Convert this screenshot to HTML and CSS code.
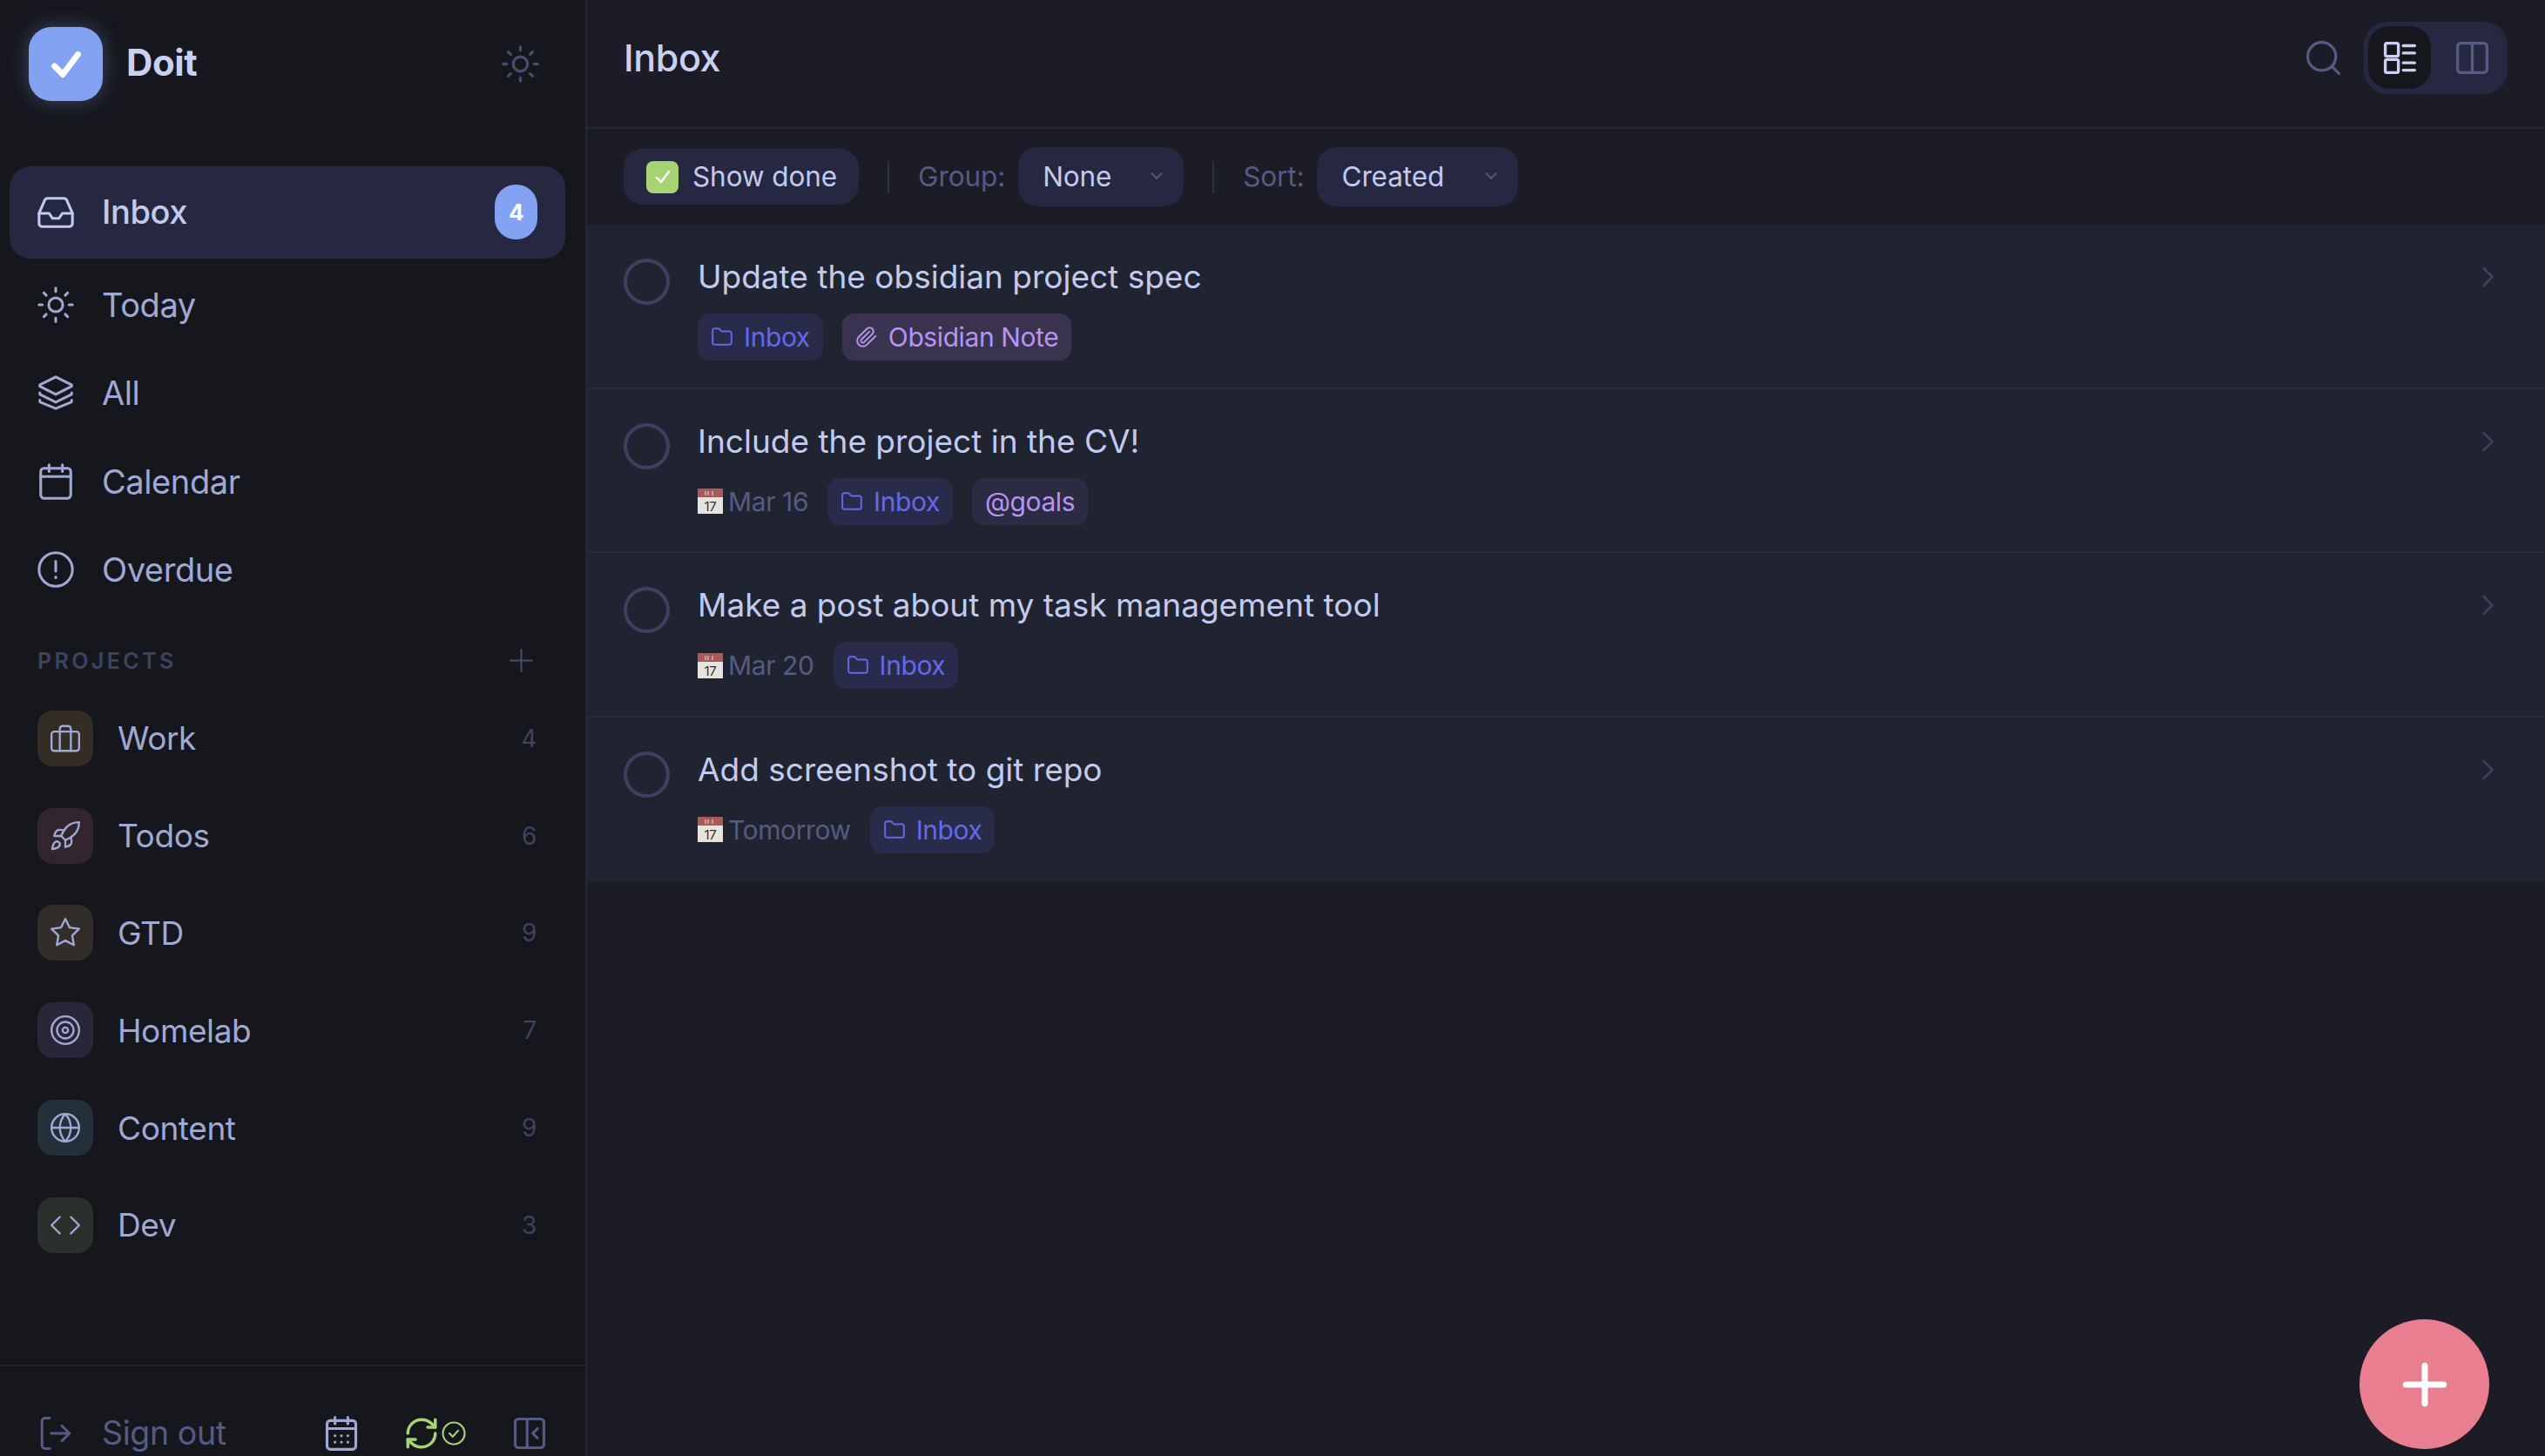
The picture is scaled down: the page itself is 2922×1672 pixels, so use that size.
FILE: index.html
```html
<!DOCTYPE html>
<html lang="en">
<head>
  <meta charset="UTF-8">
  <title>Doit</title>
  <link rel="stylesheet" href="styles.css">
</head>
<body>
  <svg class="sprite" xmlns="http://www.w3.org/2000/svg">
    <symbol id="i-inbox" viewBox="0 0 24 24"><path d="M2 13h6l2 3h4l2-3h6"/><path d="M5.400 5.100 2 13v6a2 2 0 0 0 2 2h16a2 2 0 0 0 2-2v-6l-3.400-7.900A2 2 0 0 0 16.800 4H7.200a2 2 0 0 0-1.800 1.100z"/></symbol>
    <symbol id="i-sun" viewBox="0 0 24 24"><circle cx="12" cy="12" r="4.200"/><path d="M12 2v2M12 20v2M4.900 4.900l1.400 1.400M17.700 17.700l1.400 1.400M2 12h2M20 12h2M6.300 17.700l-1.400 1.400M19.100 4.900l-1.400 1.400"/></symbol>
    <symbol id="i-layers" viewBox="0 0 24 24"><path d="M12 2.500 2.500 7.200v1L12 13l9.500-4.800v-1z"/><path d="M2.500 12v1l9.500 4.700 9.500-4.700v-1"/><path d="M2.500 16.500v1l9.500 4 9.500-4v-1"/></symbol>
    <symbol id="i-calendar" viewBox="0 0 24 24"><rect x="3" y="4" width="18" height="18" rx="2"/><path d="M8 2v4M16 2v4M3 9h18"/></symbol>
    <symbol id="i-alert" viewBox="0 0 24 24"><circle cx="12" cy="12" r="10"/><path d="M12 7v6M12 16.500v.5"/></symbol>
    <symbol id="i-plus" viewBox="0 0 24 24"><path d="M12 3v18M3 12h18"/></symbol>
    <symbol id="i-briefcase" viewBox="0 0 24 24"><rect x="2" y="7" width="20" height="14" rx="2"/><path d="M16 21V5a2 2 0 0 0-2-2h-4a2 2 0 0 0-2 2v16"/></symbol>
    <symbol id="i-rocket" viewBox="0 0 24 24"><path d="M4.500 16.500c-1.500 1.260-2 5-2 5s3.740-.5 5-2c.71-.84.7-2.130-.09-2.910a2.180 2.180 0 0 0-2.910-.09z"/><path d="m12 15-3-3a22 22 0 0 1 2-3.950A12.880 12.880 0 0 1 22 2c0 2.720-.78 7.500-6 11a22.350 22.350 0 0 1-4 2z"/><path d="M9 12H4s.55-3.030 2-4c1.620-1.080 5 0 5 0"/><path d="M12 15v5s3.030-.55 4-2c1.080-1.620 0-5 0-5"/></symbol>
    <symbol id="i-star" viewBox="0 0 24 24"><path d="M12 2l3.090 6.260L22 9.270l-5 4.870 1.180 6.880L12 17.770l-6.180 3.250L7 14.140 2 9.270l6.910-1.010z"/></symbol>
    <symbol id="i-target" viewBox="0 0 24 24"><circle cx="12" cy="12" r="10"/><circle cx="12" cy="12" r="6"/><circle cx="12" cy="12" r="2"/></symbol>
    <symbol id="i-globe" viewBox="0 0 24 24"><circle cx="12" cy="12" r="10"/><path d="M2 12h20"/><path d="M12 2a15.300 15.300 0 0 1 4 10 15.300 15.300 0 0 1-4 10 15.300 15.300 0 0 1-4-10 15.300 15.300 0 0 1 4-10z"/></symbol>
    <symbol id="i-code" viewBox="0 0 24 24"><path d="M16 18l6-6-6-6M8 6l-6 6 6 6"/></symbol>
    <symbol id="i-logout" viewBox="0 0 24 24"><path d="M8 22H5a2 2 0 0 1-2-2V4a2 2 0 0 1 2-2h3"/><path d="M16 17l5-5-5-5M21 12H9"/></symbol>
    <symbol id="i-calendar-days" viewBox="0 0 24 24"><rect x="3" y="4" width="18" height="18" rx="2"/><path d="M8 2v4M16 2v4M3 9h18"/><path d="M8 13.500h.01M12 13.500h.01M16 13.500h.01M8 17.500h.01M12 17.500h.01M16 17.500h.01"/></symbol>
    <symbol id="i-sync" viewBox="0 0 24 24"><path d="M3 12a9 9 0 0 1 9-9 9.750 9.750 0 0 1 6.740 2.740L21 8"/><path d="M21 3v5h-5"/><path d="M21 12a9 9 0 0 1-9 9 9.750 9.750 0 0 1-6.740-2.740L3 16"/><path d="M8 16H3v5"/></symbol>
    <symbol id="i-check-circle" viewBox="0 0 24 24"><circle cx="12" cy="12" r="10"/><path d="M8 12l3 3 5-5.500"/></symbol>
    <symbol id="i-panel" viewBox="0 0 24 24"><rect x="3" y="3" width="18" height="18" rx="2"/><path d="M10.500 3v18M17 9l-3 3 3 3"/></symbol>
    <symbol id="i-search" viewBox="0 0 24 24"><circle cx="11" cy="11" r="9"/><path d="M22 22l-4.500-4.500"/></symbol>
    <symbol id="i-list" viewBox="0 0 24 24"><rect x="3" y="3" width="8" height="8" rx="1"/><rect x="3" y="13" width="8" height="8" rx="1"/><path d="M14 4.500h7M14 9h7M14 15h7M14 19.500h7"/></symbol>
    <symbol id="i-columns" viewBox="0 0 24 24"><rect x="3" y="3" width="18" height="18" rx="2"/><path d="M12 3v18"/></symbol>
    <symbol id="i-chevron-down" viewBox="0 0 24 24"><path d="M6 9l6 6 6-6"/></symbol>
    <symbol id="i-chevron-right" viewBox="0 0 24 24"><path d="M9 3l9 9-9 9"/></symbol>
    <symbol id="i-folder" viewBox="0 0 24 24"><path d="M4 20h16a2 2 0 0 0 2-2V8a2 2 0 0 0-2-2h-7.930a2 2 0 0 1-1.660-.9l-.82-1.200A2 2 0 0 0 7.930 3H4a2 2 0 0 0-2 2v13c0 1.100.9 2 2 2z"/></symbol>
    <symbol id="i-clip" viewBox="0 0 24 24"><path d="m21.440 11.050-9.190 9.190a6 6 0 0 1-8.490-8.490l8.570-8.570A4 4 0 1 1 18 8.840l-8.590 8.570a2 2 0 0 1-2.830-2.830l8.490-8.480"/></symbol>
    <symbol id="i-check" viewBox="0 0 24 24"><path d="M5 13l5 5L19 6"/></symbol>
    <symbol id="i-date" viewBox="0 0 29 29">
      <rect width="29" height="29" fill="#e6e4de"/>
      <rect width="29" height="10" fill="#a75a58"/>
      <path d="M9 3v5M12 3v5M17 3v5" stroke="#e6e4de" stroke-width="1"/>
      <text x="14.500" y="26" text-anchor="middle" class="date-num">17</text>
    </symbol>
  </svg>

  <aside class="sidebar">
    <div class="brand">
      <span class="logo"><svg class="ico"><use href="#i-check"/></svg></span>
      <span class="brand-name">Doit</span>
      <svg class="ico theme-toggle"><use href="#i-sun"/></svg>
    </div>

    <nav class="nav">
      <a class="nav-item active"><svg class="ico"><use href="#i-inbox"/></svg><span>Inbox</span><span class="badge">4</span></a>
      <a class="nav-item"><svg class="ico"><use href="#i-sun"/></svg><span>Today</span></a>
      <a class="nav-item"><svg class="ico"><use href="#i-layers"/></svg><span>All</span></a>
      <a class="nav-item"><svg class="ico"><use href="#i-calendar"/></svg><span>Calendar</span></a>
      <a class="nav-item"><svg class="ico"><use href="#i-alert"/></svg><span>Overdue</span></a>
    </nav>

    <div class="section-head">
      <span>PROJECTS</span>
      <svg class="ico"><use href="#i-plus"/></svg>
    </div>

    <ul class="projects">
      <li class="project"><span class="project-ico work"><svg class="ico"><use href="#i-briefcase"/></svg></span><span class="project-name">Work</span><span class="count">4</span></li>
      <li class="project"><span class="project-ico todos"><svg class="ico"><use href="#i-rocket"/></svg></span><span class="project-name">Todos</span><span class="count">6</span></li>
      <li class="project"><span class="project-ico gtd"><svg class="ico"><use href="#i-star"/></svg></span><span class="project-name">GTD</span><span class="count">9</span></li>
      <li class="project"><span class="project-ico homelab"><svg class="ico"><use href="#i-target"/></svg></span><span class="project-name">Homelab</span><span class="count">7</span></li>
      <li class="project"><span class="project-ico content"><svg class="ico"><use href="#i-globe"/></svg></span><span class="project-name">Content</span><span class="count">9</span></li>
      <li class="project"><span class="project-ico dev"><svg class="ico"><use href="#i-code"/></svg></span><span class="project-name">Dev</span><span class="count">3</span></li>
    </ul>

    <footer class="side-foot">
      <svg class="ico signout-ico"><use href="#i-logout"/></svg>
      <span class="signout">Sign out</span>
      <svg class="ico foot-cal"><use href="#i-calendar-days"/></svg>
      <svg class="ico foot-sync"><use href="#i-sync"/></svg>
      <svg class="ico foot-ok"><use href="#i-check-circle"/></svg>
      <svg class="ico foot-panel"><use href="#i-panel"/></svg>
    </footer>
  </aside>

  <main class="main">
    <header class="topbar">
      <h1>Inbox</h1>
      <svg class="ico search"><use href="#i-search"/></svg>
      <div class="view-toggle">
        <span class="view-btn on"><svg class="ico"><use href="#i-list"/></svg></span>
        <span class="view-btn"><svg class="ico"><use href="#i-columns"/></svg></span>
      </div>
    </header>

    <div class="toolbar">
      <label class="show-done"><span class="checkbox"><svg class="ico"><use href="#i-check"/></svg></span>Show done</label>
      <span class="sep"></span>
      <span class="filter-label">Group:</span>
      <span class="select select-group">None<svg class="ico"><use href="#i-chevron-down"/></svg></span>
      <span class="sep"></span>
      <span class="filter-label">Sort:</span>
      <span class="select select-sort">Created<svg class="ico"><use href="#i-chevron-down"/></svg></span>
    </div>

    <section class="tasks">
      <article class="task">
        <span class="circle"></span>
        <div class="task-body">
          <div class="task-title">Update the obsidian project spec</div>
          <div class="meta">
            <span class="tag tag-project"><svg class="ico"><use href="#i-folder"/></svg>Inbox</span>
            <span class="tag tag-note"><svg class="ico"><use href="#i-clip"/></svg>Obsidian Note</span>
          </div>
        </div>
        <svg class="ico chevron"><use href="#i-chevron-right"/></svg>
      </article>
      <article class="task">
        <span class="circle"></span>
        <div class="task-body">
          <div class="task-title">Include the project in the CV!</div>
          <div class="meta">
            <span class="date"><svg class="date-ico"><use href="#i-date"/></svg>Mar 16</span>
            <span class="tag tag-project"><svg class="ico"><use href="#i-folder"/></svg>Inbox</span>
            <span class="tag tag-label">@goals</span>
          </div>
        </div>
        <svg class="ico chevron"><use href="#i-chevron-right"/></svg>
      </article>
      <article class="task">
        <span class="circle"></span>
        <div class="task-body">
          <div class="task-title">Make a post about my task management tool</div>
          <div class="meta">
            <span class="date"><svg class="date-ico"><use href="#i-date"/></svg>Mar 20</span>
            <span class="tag tag-project"><svg class="ico"><use href="#i-folder"/></svg>Inbox</span>
          </div>
        </div>
        <svg class="ico chevron"><use href="#i-chevron-right"/></svg>
      </article>
      <article class="task">
        <span class="circle"></span>
        <div class="task-body">
          <div class="task-title">Add screenshot to git repo</div>
          <div class="meta">
            <span class="date"><svg class="date-ico"><use href="#i-date"/></svg>Tomorrow</span>
            <span class="tag tag-project"><svg class="ico"><use href="#i-folder"/></svg>Inbox</span>
          </div>
        </div>
        <svg class="ico chevron"><use href="#i-chevron-right"/></svg>
      </article>
    </section>

    <button class="fab"><svg class="ico"><use href="#i-plus"/></svg></button>
  </main>
</body>
</html>
```

FILE: styles.css
```css
* { box-sizing: border-box; }
html, body { height: 100%; }
body { margin: 0; display: flex; overflow: hidden; background: #1b1c26; color: #c2caf0; font-family: Inter, "Liberation Sans", sans-serif; letter-spacing: -0.4px; }
.sprite { display: none; }
.ico { fill: none; stroke: currentColor; stroke-width: 2; stroke-linecap: round; stroke-linejoin: round; flex: none; }
ul { list-style: none; margin: 0; padding: 0; }

/* sidebar */
.sidebar { width: 674px; flex: none; height: 100vh; display: flex; flex-direction: column; background: #16171d; border-right: 2px solid #232636; }
.brand { display: flex; align-items: center; height: 85px; margin-top: 31px; padding-left: 33px; padding-right: 51px; }
.logo { width: 85px; height: 85px; border-radius: 26px; background: #84a2f2; color: #fff; display: flex; align-items: center; justify-content: center; box-shadow: 0 0 22px rgba(132, 162, 242, 0.35); }
.logo .ico { width: 46px; height: 46px; stroke-width: 3.600; }
.brand-name { margin-left: 27px; margin-bottom: 4px; font-size: 42px; font-weight: 700; color: #c8d0f3; }
.theme-toggle { width: 47px; height: 47px; margin-left: auto; color: #474c6b; stroke-width: 1.700; }

.nav { margin-top: 75px; padding: 0 23px 0 11px; display: flex; flex-direction: column; }
.nav-item { display: flex; align-items: center; height: 101.500px; padding: 0 32px 2px 30px; font-size: 38px; color: #a0a9d4; }
.nav-item .ico { width: 46px; height: 46px; margin-right: 30px; stroke-width: 1.600; }
.nav-item.active { height: 106px; margin-bottom: 3px; border-radius: 24px; background: #252840; color: #c2caf0; font-weight: 500; }
.badge { margin-left: auto; width: 49px; height: 63px; border-radius: 24px; background: #84a2f2; color: #fff; font-size: 26px; font-weight: 700; display: flex; align-items: center; justify-content: center; }

.section-head { display: flex; align-items: center; justify-content: space-between; margin-top: 36px; padding: 0 57px 0 43px; font-size: 25px; font-weight: 600; letter-spacing: 3.400px; color: #3e4360; }
.section-head .ico { width: 33px; height: 33px; color: #474c6b; stroke-width: 1.500; }

.projects { margin-top: 17px; }
.project { display: flex; align-items: center; height: 111.800px; padding: 0 56px 0 43px; font-size: 37px; color: #a0a9d4; }
.project-ico { width: 64px; height: 64px; border-radius: 18px; display: flex; align-items: center; justify-content: center; }
.project-ico .ico { width: 38px; height: 38px; stroke-width: 1.500; }
.project-name { margin-left: 28px; }
.count { margin-left: auto; font-size: 28px; color: #3e4360; }
.work { background: #342d25; }
.todos { background: #33252e; }
.gtd { background: #322c2b; }
.homelab { background: #292639; }
.content { background: #23303a; }
.dev { background: #2a312c; }

.side-foot { margin-top: auto; height: 105px; border-top: 2px solid #232636; display: flex; align-items: center; padding: 50px 42px 0 43px; color: #555b82; }
.signout-ico { width: 42px; height: 42px; stroke-width: 1.700; }
.signout { margin-left: 32px; font-size: 37.500px; }
.foot-cal { width: 44px; height: 44px; margin-left: auto; color: #a0a9d4; stroke-width: 1.700; }
.foot-sync { width: 42px; height: 42px; margin-left: 49px; color: #a6d472; stroke-width: 2; }
.foot-ok { width: 30px; height: 30px; margin-left: 1px; color: #a6d472; stroke-width: 1.700; }
.foot-panel { width: 44px; height: 44px; margin-left: 50px; stroke-width: 1.700; }

/* main column */
.main { flex: 1; min-width: 0; display: flex; flex-direction: column; position: relative; }
.topbar { height: 148px; flex: none; display: flex; align-items: center; padding: 0 43px 14px 42px; border-bottom: 2px solid #232636; }
.topbar h1 { margin: 0; font-size: 43px; font-weight: 500; color: #c8d0f3; }
.search { width: 43px; height: 43px; margin-left: auto; color: #555b82; stroke-width: 1.800; }
.view-toggle { display: flex; align-items: center; width: 165px; height: 83px; margin-left: 25px; padding: 0 5px; border-radius: 27px; background: #252840; }
.view-btn { width: 72px; height: 72px; border-radius: 24px; display: flex; align-items: center; justify-content: center; color: #555b82; }
.view-btn.on { background: #16171d; color: #c8d0f3; }
.view-btn + .view-btn { margin-left: 11px; }
.view-btn .ico { width: 45px; height: 45px; stroke-width: 1.800; }

.toolbar { height: 110px; flex: none; display: flex; align-items: center; padding-left: 42px; font-size: 31.500px; letter-spacing: -0.1px; }
.show-done { width: 270px; height: 64px; padding: 0 0 2px 26px; border-radius: 22px; background: #252840; display: flex; align-items: center; }
.checkbox { width: 37px; height: 37px; margin-right: 16px; margin-top: 2px; border-radius: 8px; background: #a6d472; color: #fff; display: flex; align-items: center; justify-content: center; }
.checkbox .ico { width: 24px; height: 24px; stroke-width: 2.500; }
.sep { width: 2px; height: 37px; margin: 0 33px; background: #2d3147; }
.filter-label { color: #555b82; margin-right: 15px; padding-bottom: 2px; }
.select { height: 68px; border-radius: 22px; background: #252840; display: flex; align-items: center; padding: 0 20px 2px 28px; justify-content: space-between; }
.select-group { width: 190px; }
.select-sort { width: 231px; }
.select .ico { width: 22px; height: 22px; color: #555b82; }

.tasks { background: #202431; }
.task { display: flex; align-items: flex-start; height: 188.600px; padding: 39px 54px 0 42px; border-bottom: 2px solid #272a3b; }
.task:last-child { border-bottom: none; }
.circle { width: 53px; height: 53px; flex: none; border: 4px solid #3c4160; border-radius: 50%; }
.task-body { margin-left: 32px; flex: 1; }
.task-title { font-size: 37px; line-height: 44px; margin-top: -1px; letter-spacing: 0; }
.meta { display: flex; align-items: center; gap: 22px; margin-top: 20px; font-size: 30px; }
.tag { height: 54px; padding: 0 15px; border-radius: 14px; display: flex; align-items: center; }
.tag .ico { width: 26px; height: 26px; margin-right: 12px; stroke-width: 1.800; }
.tag-project { background: #282b4a; color: #6469e8; }
.tag-note { background: #3a3350; color: #b794f0; }
.tag-label { background: #2c2b44; color: #b794f0; }
.date { display: flex; align-items: center; color: #555b82; }
.date-ico { width: 29px; height: 29px; margin-right: 6px; }
.date-num { font-size: 15px; font-family: Inter, sans-serif; fill: #333; }
.chevron { width: 26px; height: 26px; color: #3c4160; margin-top: 8px; stroke-width: 2.400; }

.fab { position: absolute; left: 2035px; top: 1515px; width: 149px; height: 149px; padding: 0; border: none; border-radius: 50%; background: #e97e90; color: #fff; display: flex; align-items: center; justify-content: center; }
.fab .ico { width: 58px; height: 58px; stroke-width: 2.900; }
```
